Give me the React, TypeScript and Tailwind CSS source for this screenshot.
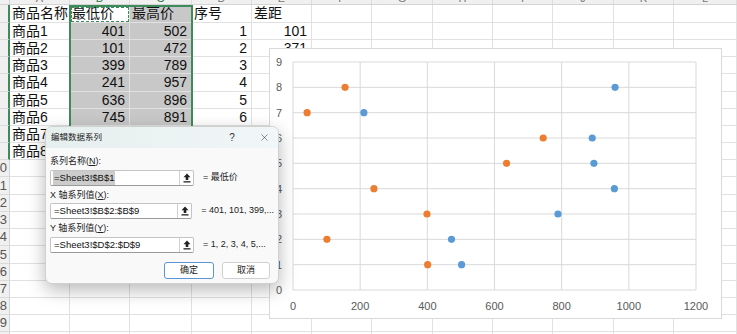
import { X } from 'lucide-react';

const colW = ['w-[60px]', 'w-[60px]', 'w-[62px]', 'w-[60px]', 'w-[60px]', 'w-[60px]', 'w-[61px]', 'w-[60px]', 'w-[60px]', 'w-[61px]', 'w-[60px]', 'w-[63px]'];
const colLetters = ['A', 'B', 'C', 'D', 'E', 'F', 'G', 'H', 'I', 'J', 'K', 'L'];
const rowH = ['h-[18px]', 'h-[17px]', 'h-[17px]', 'h-[17px]', 'h-[18px]', 'h-[17px]', 'h-[17px]', 'h-[17px]', 'h-[17px]', 'h-[17px]', 'h-[18px]', 'h-[17px]', 'h-[17px]', 'h-[17px]', 'h-[18px]', 'h-[17px]', 'h-[17px]', 'h-[17px]', 'h-[17px]', 'h-[17px]'];

const data: (string | number)[][] = [
  ['商品名称', '最低价', '最高价', '序号', '差距'],
  ['商品1', 401, 502, 1, 101],
  ['商品2', 101, 472, 2, 371],
  ['商品3', 399, 789, 3, 390],
  ['商品4', 241, 957, 4, 716],
  ['商品5', 636, 896, 5, 260],
  ['商品6', 745, 891, 6, 146],
  ['商品7', 42, 211, 7, 169],
  ['商品8', 155, 959, 8, 804],
];

const font = { fontFamily: '"Liberation Sans", "Noto Sans CJK SC", sans-serif' };

function Sheet() {
  return (
    <div className="flex flex-col" style={font}>
      {/* column header strip, mostly scrolled out of view */}
      <div className="flex h-[5px] bg-[#f0f0f0] border-b border-[#d4d4d4] overflow-hidden">
        <div className="w-[10px] shrink-0 border-r border-[#d4d4d4]" />
        {colLetters.map((l, i) => (
          <div key={l} className={`${colW[i]} shrink-0 border-r border-[#dcdcdc] text-center text-[11px] leading-[12px] text-[#777] -mt-[8px] ${i === 1 || i === 2 ? 'text-[#217346]' : ''}`}>
            {l}
          </div>
        ))}
      </div>
      {rowH.map((h, r) => {
        const n = r + 1;
        const row = data[r];
        return (
          <div key={n} className={`flex ${h}`}>
            <div className={`w-[10px] shrink-0 bg-[#f0f0f0] border-b border-[#dadada] overflow-hidden flex items-center justify-end pr-[2px] text-[13px] text-[#555] ${n <= 9 ? 'border-r-2 border-r-[#3d8b5a]' : 'border-r border-r-[#d4d4d4]'}`}>
              {n >= 10 ? <span className="whitespace-nowrap">{n}</span> : null}
            </div>
            {colW.map((w, c) => {
              const v = row ? row[c] : undefined;
              const grey = (c === 1 || c === 2) && n <= 9 && !(c === 1 && n === 1);
              const isNum = typeof v === 'number';
              return (
                <div
                  key={c}
                  className={`${w} shrink-0 border-r border-b border-[#e1e1e1] flex items-center overflow-hidden whitespace-nowrap text-[14px] text-[#111] ${grey ? 'bg-[#c8c8c8]' : 'bg-white'} ${isNum ? 'justify-end pr-[4px]' : 'pl-[2px]'}`}
                >
                  {v}
                </div>
              );
            })}
          </div>
        );
      })}
    </div>
  );
}

const low = [401, 101, 399, 241, 636, 745, 42, 155];
const high = [502, 472, 789, 957, 896, 891, 211, 959];
const px = (x: number) => 24 + (x / 1200) * 403;
const py = (y: number) => 242 - (y / 9) * 228;

function Chart() {
  return (
    <div className="absolute left-[269px] top-[48px] w-[453px] h-[271px] bg-white border border-[#d9d9d9]" style={font}>
      <svg width="451" height="269" viewBox="1 1 451 269">
        {[0, 1, 2, 3, 4, 5, 6, 7, 8, 9].map((y) => (
          <line key={`h${y}`} x1={24} x2={427} y1={py(y)} y2={py(y)} stroke="#d9d9d9" strokeWidth="1" />
        ))}
        {[0, 200, 400, 600, 800, 1000, 1200].map((x) => (
          <line key={`v${x}`} x1={px(x)} x2={px(x)} y1={14} y2={242} stroke="#d9d9d9" strokeWidth="1" />
        ))}
        {[0, 1, 2, 3, 4, 5, 6, 7, 8, 9].map((y) => (
          <text key={`ly${y}`} x={10} y={py(y) + 4} fontSize="11" fill="#595959" textAnchor="middle">{y}</text>
        ))}
        {[0, 200, 400, 600, 800, 1000, 1200].map((x) => (
          <text key={`lx${x}`} x={px(x)} y={262} fontSize="11" fill="#595959" textAnchor="middle">{x}</text>
        ))}
        {high.map((x, i) => (
          <circle key={`b${i}`} cx={px(x)} cy={py(i + 1)} r="3.6" fill="#5b9bd5" />
        ))}
        {low.map((x, i) => (
          <circle key={`o${i}`} cx={px(x)} cy={py(i + 1)} r="3.6" fill="#ed7d31" />
        ))}
      </svg>
    </div>
  );
}

function UploadIcon() {
  return (
    <svg width="8" height="10" viewBox="0 0 8 10">
      <path d="M4 0.5L7.5 4.2H5.3V7H2.7V4.2H0.5Z" fill="#222" />
      <rect x="0.5" y="8.2" width="7" height="1.3" fill="#222" />
    </svg>
  );
}

function RefInput({ value, result, selected }: { value: string; result: string; selected?: boolean }) {
  return (
    <div className="flex items-center h-[16px]">
      <div className="w-[144px] h-[16px] flex bg-white border border-[#c4c4c4] border-b-[#9a9a9a] rounded-[2px]">
        <div className="flex-1 flex items-center pl-[2px] text-[9.5px] text-[#111] overflow-hidden whitespace-nowrap">
          <span className={selected ? 'bg-[#cccccc] px-[1px]' : 'px-[1px]'}>{value}</span>
        </div>
        <div className="w-[14px] border-l border-[#d0d0d0] flex items-center justify-center">
          <UploadIcon />
        </div>
      </div>
      <div className="ml-[9px] text-[9px] text-[#222] whitespace-nowrap">{result}</div>
    </div>
  );
}

function Label({ text, key_, after }: { text: string; key_: string; after?: string }) {
  return (
    <div className="h-[14px] leading-[14px] text-[9px] text-[#222] whitespace-nowrap">
      {text}(<span className="underline">{key_}</span>):{after}
    </div>
  );
}

function Dialog() {
  return (
    <div
      className="absolute left-[45px] top-[126px] w-[234px] h-[158px] rounded-[7px] bg-[#f9f9f9] border border-[#d0d0d0] shadow-[0_6px_18px_rgba(0,0,0,0.28)] overflow-hidden flex flex-col"
      style={font}
    >
      <div className="h-[21px] shrink-0 flex items-center pl-[5px] bg-gradient-to-r from-[#e5efed] to-[#f1f6f8] text-[8.5px] text-[#222]">
        <span>编辑数据系列</span>
        <span className="ml-auto text-[10px] text-[#333] w-[10px] text-center">?</span>
        <span className="ml-[22px] mr-[8px] flex items-center">
          <X size={11} strokeWidth={1.2} color="#333" />
        </span>
      </div>
      <div className="flex flex-col px-[4px] pt-[6px]">
        <Label text="系列名称" key_="N" />
        <div className="mt-[2px]">
          <RefInput value="=Sheet3!$B$1" result="= 最低价" selected />
        </div>
        <div className="mt-[2px]">
          <Label text="X 轴系列值" key_="X" />
        </div>
        <div className="mt-[1px]">
          <RefInput value="=Sheet3!$B$2:$B$9" result="= 401, 101, 399,..." />
        </div>
        <div className="mt-[2px]">
          <Label text="Y 轴系列值" key_="Y" />
        </div>
        <div className="mt-[2px]">
          <RefInput value="=Sheet3!$D$2:$D$9" result="= 1, 2, 3, 4, 5,..." />
        </div>
        <div className="mt-[9px] flex justify-end pr-[4px] gap-[8px]">
          <button className="w-[50px] h-[17px] rounded-[3px] bg-white border border-[#5b95d6] text-[9px] text-[#222]">确定</button>
          <button className="w-[48px] h-[17px] rounded-[3px] bg-white border border-[#d0d0d0] text-[9px] text-[#222]">取消</button>
        </div>
      </div>
    </div>
  );
}

export default function App() {
  return (
    <div className="relative w-[737px] h-[334px] overflow-hidden bg-white">
      <Sheet />
      {/* selection outline around B1:C9 */}
      <div className="absolute left-[69px] top-[5px] w-[124px] h-[156px] border-2 border-[#3d8b5a] pointer-events-none" />
      <div className="absolute left-[71px] top-[7px] w-[58px] h-[15px] border border-dashed border-[#3d8b5a] pointer-events-none" />
      <Chart />
      <Dialog />
    </div>
  );
}
